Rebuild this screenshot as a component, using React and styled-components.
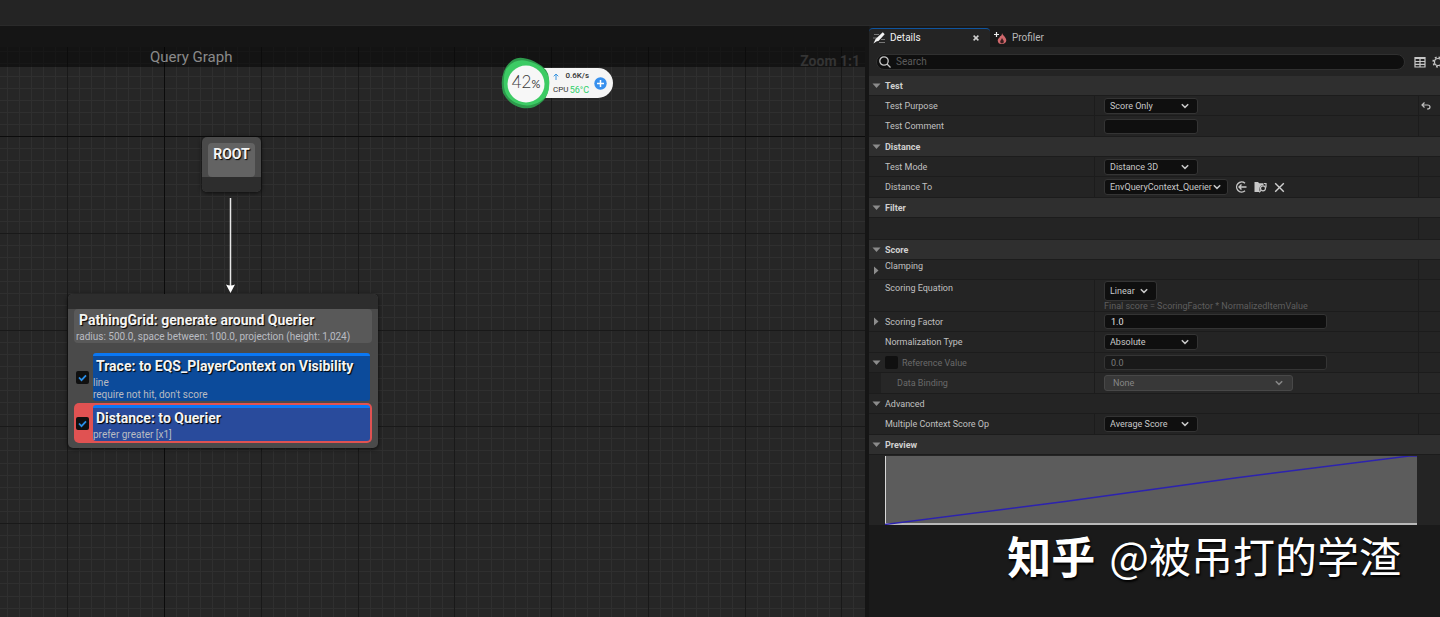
import React from "react";
import styled, { createGlobalStyle, css } from "styled-components";

const Global = createGlobalStyle`
  *, *::before, *::after { box-sizing: border-box; }
  body {
    margin: 0;
    background: #1a1a1a;
    color: #c0c0c0;
    font-family: Roboto, "Noto Sans CJK SC", sans-serif;
    font-size: 9px;
    line-height: 12px;
  }
  h1, h2, h3, p { margin: 0; font: inherit; }
  button, input, select { font: inherit; color: inherit; margin: 0; padding: 0; border: 0; background: none; }
  svg { display: block; flex: none; }
`;

const Page = styled.div`
  min-height: 100vh;
  display: flex;
  flex-direction: column;
`;
const TopBar = styled.header`
  height: 26px;
  background: #242424;
  border-bottom: 1px solid #2a2a2a;
`;
const Workspace = styled.main`
  flex: 1;
  display: grid;
  grid-template-columns: minmax(400px, 1fr) minmax(420px, 571px);
  column-gap: 4px;
  background: #151515;
`;

/* ---------- graph ---------- */
const GraphPane = styled.section`
  display: flex;
  flex-direction: column;
  padding-top: 21px;
  overflow: hidden;
`;
const Canvas = styled.div`
  flex: 1;
  position: relative;
  background: #262626;
`;
const GridSvg = styled.svg`
  position: absolute;
  inset: 0;
  width: 100%;
  height: 100%;
`;
const TitleBar = styled.div`
  position: relative;
  height: 20px;
  padding: 0 5px 0 150px;
  display: flex;
  justify-content: space-between;
  background: rgba(0, 0, 0, 0.5);
  color: #8a8a8a;
  font-size: 15px;
  line-height: 20px;
`;
const ZoomLabel = styled.span`
  padding-top: 4px;
  color: #343434;
  font-size: 14px;
  font-weight: 700;
`;
const Wire = styled.svg`
  position: absolute;
  left: 224px;
  top: 151px;
`;
const nodeFrame = css`
  position: absolute;
  border-radius: 5px;
  background: #4a4a4a;
  box-shadow: 0 1px 4px rgba(0, 0, 0, 0.7);
  overflow: hidden;
`;
const RootNode = styled.article`
  ${nodeFrame}
  left: 202px;
  top: 90px;
  width: 59px;
  padding: 6px 6px 0;
  &::after {
    content: "";
    display: block;
    height: 15px;
    margin: 0 -6px;
    background: #2d2d2d;
  }
`;
const NodeTitle = styled.h2`
  padding-bottom: 2px;
  color: #f4f4f4;
  font-size: 14px;
  font-weight: 700;
  line-height: 18px;
  text-shadow: 1px 1px 1px #000;
  white-space: nowrap;
`;
const RootFace = styled.div`
  height: 34px;
  padding-top: 2px;
  border-radius: 4px;
  background: #636363;
  text-align: center;
`;
const QueryNode = styled.article`
  ${nodeFrame}
  left: 68px;
  top: 247px;
  width: 310px;
  padding: 0 6px 5px;
  &::before {
    content: "";
    display: block;
    height: 15px;
    margin: 0 -6px;
    background: #2d2d2d;
  }
`;
const Generator = styled.div`
  height: 34px;
  padding: 2px 2px 0;
  border-radius: 4px;
  background: #595959;
`;
const Detail = styled.p`
  color: #b9bcc2;
  font-size: 10px;
  line-height: 12px;
  white-space: nowrap;
`;
const Indent = styled.div`
  padding-left: 3px;
`;
const TestList = styled.div`
  padding-top: 8px;
  display: grid;
`;
const TestCard = styled.div`
  display: grid;
  grid-template-columns: 17px 1fr;
  align-items: center;
  padding: 2px;
  border-radius: 5px;
  background: ${(p) => (p.$selected ? "#e05252" : "transparent")};
`;
const TestBody = styled.div`
  padding-top: 1px;
  border-top: 3px solid #0a78f5;
  border-radius: 3px;
  background: ${(p) => (p.$selected ? "#294b9c" : "#0c4b9b")};
`;
const Tick = styled.input.attrs({ type: "checkbox" })`
  appearance: none;
  width: 13px;
  height: 13px;
  border-radius: 2px;
  background: #101010;
  &:checked {
    background: #101010 url("data:image/svg+xml,%3Csvg xmlns='http://www.w3.org/2000/svg' viewBox='0 0 13 13'%3E%3Cpath d='M3 6.5l2.5 2.6L10 4.4' fill='none' stroke='%232a8fe8' stroke-width='1.8'/%3E%3C/svg%3E");
  }
`;

/* ---------- resource monitor ---------- */
const Monitor = styled.aside`
  position: absolute;
  left: 501px;
  top: 10px;
  display: flex;
  align-items: center;
`;
const Gauge = styled.div`
  position: relative;
  z-index: 1;
  display: grid;
  place-items: center;
  width: 50px;
  height: 52px;
  color: #3a3a3a;
  font-family: Lato, sans-serif;
  font-size: 17px;
  font-weight: 300;
  line-height: 20px;
  > * { grid-area: 1 / 1; }
  > span { position: relative; }
  small { font-size: 11px; font-weight: 400; }
`;
const Stats = styled.div`
  display: flex;
  align-items: center;
  gap: 5px;
  width: 78px;
  height: 30px;
  margin-left: -16px;
  padding: 0 6px 0 18px;
  border-radius: 0 15px 15px 0;
  background: #f5f5f5;
  color: #333;
`;
const StatLines = styled.div`
  flex: 1;
  display: grid;
  gap: 2px;
  font-size: 8px;
  white-space: nowrap;
`;
const StatLine = styled.div`
  display: flex;
  justify-content: space-between;
  align-items: center;
`;
const Rate = styled.span`
  font-weight: 500;
`;
const Temp = styled.span`
  color: #2fcf6a;
  font-size: 9px;
`;
const RoundButton = styled.button`
  flex: none;
`;

/* ---------- details panel ---------- */
const Panel = styled.section`
  display: flex;
  flex-direction: column;
  background: #1a1a1a;
`;
const Tabs = styled.nav`
  display: flex;
  padding-top: 2px;
  height: 21px;
`;
const Tab = styled.button`
  display: flex;
  align-items: center;
  gap: 5px;
  width: ${(p) => (p.$active ? "121px" : "auto")};
  padding: 0 11px 0 4px;
  border-radius: 4px 4px 0 0;
  border-top: 1px solid ${(p) => (p.$active ? "#0f55a0" : "transparent")};
  background: ${(p) => (p.$active ? "#242424" : "transparent")};
  color: ${(p) => (p.$active ? "#f0f0f0" : "#b8b8b8")};
  font-size: 10px;
  > :nth-child(3) { margin-left: auto; }
`;
const SearchRow = styled.div`
  display: flex;
  align-items: center;
  gap: 9px;
  height: 29px;
  padding-left: 7px;
  background: #242424;
  overflow: hidden;
`;
const SearchBox = styled.label`
  flex: 1;
  display: flex;
  align-items: center;
  gap: 5px;
  height: 16px;
  padding-left: 2px;
  border: 1px solid #303030;
  border-radius: 8px;
  background: #0f0f0f;
  color: #c8c8c8;
  input { flex: 1; outline: 0; font-size: 10px; }
  input::placeholder { color: #5c5c5c; opacity: 1; }
`;
const Tools = styled.div`
  display: flex;
  gap: 6px;
  margin-right: -4px;
  color: #c8c8c8;
`;
const Group = styled.section``;
const GroupHead = styled.h2`
  display: flex;
  align-items: center;
  gap: 4px;
  height: 20px;
  padding-left: 3px;
  border-bottom: 1px solid #1c1c1c;
  background: #2f2f2f;
  color: #d0d0d0;
  font-weight: 700;
`;
const Row = styled.div`
  display: grid;
  grid-template-columns: 226px 1fr 22px;
  height: 20px;
  border-bottom: 1px solid #1c1c1c;
  background: ${(p) => (p.$nested ? "#272727" : "#242424")};
  color: ${(p) => (p.$muted ? "#6a6a6a" : "#c0c0c0")};
  &:nth-of-type(even) { height: 21px; }
  && { ${(p) => p.$height && css`height: ${p.$height}px;`} }
`;
const LabelCell = styled.div`
  display: flex;
  align-items: ${(p) => (p.$top ? "flex-start" : "center")};
  gap: 4px;
  padding-left: ${(p) => (p.$nested ? "28px" : "3px")};
  border-right: 1px solid ${(p) => (p.$plain ? "transparent" : "#1c1c1c")};
  white-space: nowrap;
  ${(p) => p.$nested && css`box-shadow: inset 12px 0 #202020;`}
  ${(p) => p.$lowered && css`padding-top: 2px;`}
`;
const ArrowSlot = styled.span`
  width: 9px;
  color: #8c8c8c;
  ${(p) => p.$low && css`padding-top: 6px;`}
`;
const ValueCell = styled.div`
  display: flex;
  align-items: center;
  gap: 7px;
  padding-left: 9px;
  color: #c8c8c8;
`;
const ResetCell = styled.div`
  display: grid;
  place-items: center start;
  padding-left: 2px;
  border-left: 1px solid ${(p) => (p.$plain ? "transparent" : "#1c1c1c")};
`;
const SelectBox = styled.span`
  display: grid;
  align-items: center;
  width: ${(p) => p.$width}px;
  height: ${(p) => (p.$tall ? 20 : 16)}px;
  border: 1px solid ${(p) => (p.$flat ? "#484848" : "#343434")};
  border-radius: 3px;
  background: ${(p) => (p.$flat ? "#383838" : "#0f0f0f")};
  color: ${(p) => (p.$flat ? "#868686" : "#c8c8c8")};
  > * { grid-area: 1 / 1; }
  > svg { justify-self: end; margin-right: ${(p) => p.$inset || 8}px; pointer-events: none; }
  select {
    appearance: none;
    height: 100%;
    padding-left: ${(p) => (p.$flat ? 8 : 5)}px;
    outline: 0;
    opacity: 1;
  }
`;
const TextBox = styled.input`
  width: ${(p) => p.$width}px;
  height: 15px;
  padding-left: 6px;
  border: 1px solid #343434;
  border-radius: 3px;
  background: ${(p) => (p.disabled ? "#191919" : "#0f0f0f")};
  color: ${(p) => (p.disabled ? "#7a7a7a" : "#e0e0e0")};
`;
const IconButton = styled.button`
  display: grid;
  place-items: center;
`;
const Equation = styled.div`
  display: grid;
  align-content: end;
  padding-left: 9px;
`;
const Formula = styled.p`
  color: #5e5e5e;
  line-height: 10px;
`;
const ChartRow = styled.div`
  padding: 1px 23px 0 16px;
  background: #242424;
  svg { width: 100%; height: 69px; }
`;
const Watermark = styled.footer`
  display: flex;
  justify-content: flex-end;
  align-items: center;
  gap: 14px;
  padding: 3px 39px 0 0;
  color: #fff;
  font-family: "Noto Sans CJK SC", sans-serif;
  font-size: 42px;
  line-height: 54px;
  text-shadow: 1px 2px 2px #000;
  white-space: nowrap;
  b { font-size: 44px; font-weight: 700; }
`;

const Chevron = () => (
  <svg width="8" height="6" viewBox="0 0 8 6" fill="none" stroke="currentColor" strokeWidth="1.5"><path d="M.8 1.2 4 4.4l3.2-3.2" /></svg>
);
const Triangle = ({ closed }) => (
  <svg width="9" height="9" viewBox="0 0 9 9" fill="#8c8c8c"><path d={closed ? "M2 0.5v8L6.5 4.5z" : "M0.5 2.5h8L4.5 7z"} /></svg>
);

function Select({ id, value, ...box }) {
  return (
    <SelectBox {...box}>
      <select id={id} defaultValue={value} disabled={box.$flat}><option>{value}</option></select>
      <Chevron />
    </SelectBox>
  );
}

function Property({ id, label, arrow, children, reset, ...row }) {
  return (
    <Row {...row}>
      <LabelCell $nested={row.$nested}>
        {!row.$nested && <ArrowSlot>{arrow && <Triangle closed={arrow === "closed"} />}</ArrowSlot>}
        <label htmlFor={id}>{label}</label>
      </LabelCell>
      <ValueCell>{children}</ValueCell>
      <ResetCell>{reset}</ResetCell>
    </Row>
  );
}

const Head = ({ children }) => <GroupHead><Triangle />{children}</GroupHead>;

/* 8 × 8 major squares, each split into 8 minor ones */
const TILE = 774;
const MAJORS = 8;
const MINORS = 64;
const range = (n) => Array.from({ length: n }, (_, i) => i);
const at = (i, count) => Math.round((i * TILE) / count);
const majorColor = (i) => (i === 0 ? "#0b0b0b" : "#191919");

function Grid() {
  return (
    <GridSvg aria-hidden="true" shapeRendering="crispEdges">
      <defs>
        <pattern id="grid" x="164" y="89" width={TILE} height={TILE} patternUnits="userSpaceOnUse">
          {range(MINORS).filter((i) => i % MAJORS).map((i) => (
            <path key={i} d={`M${at(i, MINORS)} 0h1v${TILE}h-1zM0 ${at(i, MINORS)}h${TILE}v1H0z`} fill="#2f2f2f" />
          ))}
          {range(MAJORS).reverse().map((i) => (
            <path key={i} d={`M${at(i, MAJORS)} 0h1v${TILE}h-1zM0 ${at(i, MAJORS)}h${TILE}v1H0z`} fill={majorColor(i)} />
          ))}
        </pattern>
      </defs>
      <rect width="100%" height="100%" fill="url(#grid)" />
    </GridSvg>
  );
}

function Graph() {
  return (
    <GraphPane>
      <Canvas>
        <Grid />
        <TitleBar>
          <span>Query Graph</span>
          <ZoomLabel>Zoom 1:1</ZoomLabel>
        </TitleBar>
        <Wire width="14" height="96" viewBox="0 0 14 96">
          <path d="M6.5 0v88" stroke="#e6e6e6" strokeWidth="1.5" />
          <path d="M2 86.5q4.5 2 9 0L6.5 95z" fill="#fff" />
        </Wire>
        <RootNode>
          <RootFace><NodeTitle>ROOT</NodeTitle></RootFace>
        </RootNode>
        <QueryNode>
          <Generator>
            <Indent><NodeTitle>PathingGrid: generate around Querier</NodeTitle></Indent>
            <Detail>radius: 500.0, space between: 100.0, projection (height: 1,024)</Detail>
          </Generator>
          <TestList>
            <TestCard>
              <Tick defaultChecked aria-label="Trace test enabled" />
              <TestBody>
                <Indent><NodeTitle>Trace: to EQS_PlayerContext on Visibility</NodeTitle></Indent>
                <Detail>line</Detail>
                <Detail>require not hit, don't score</Detail>
              </TestBody>
            </TestCard>
            <TestCard $selected>
              <Tick defaultChecked aria-label="Distance test enabled" />
              <TestBody $selected>
                <Indent><NodeTitle>Distance: to Querier</NodeTitle></Indent>
                <Detail>prefer greater [x1]</Detail>
              </TestBody>
            </TestCard>
          </TestList>
        </QueryNode>
        <Monitor>
          <Gauge>
            <svg width="50" height="52" viewBox="0 0 50 52">
              <path d="M3 14Q10-1 22 1q8 1 14 5 12 6 12 16 1 15-6 22-9 9-21 7Q8 48 2 36-1 24 3 14z" fill="#2d9a4c" />
              <path d="M5 12Q14 1 26 4q19 4 22 18 2 16-8 22-11 7-22 3Q5 43 3 30 2 19 5 12z" fill="#3fd468" opacity=".85" />
              <circle cx="25" cy="27" r="18.500" fill="#f7f7f7" />
            </svg>
            <span>42<small>%</small></span>
          </Gauge>
          <Stats>
            <StatLines>
              <StatLine>
                <svg width="6" height="7" viewBox="0 0 6 7" fill="none" stroke="#3c96e0" strokeWidth="1"><path d="M3 7V1M.7 3.3 3 1l2.3 2.3" /></svg>
                <Rate>0.6K/s</Rate>
              </StatLine>
              <StatLine><span>CPU</span><Temp>56°C</Temp></StatLine>
            </StatLines>
            <RoundButton aria-label="Boost">
              <svg width="13" height="13" viewBox="0 0 13 13"><circle cx="6.5" cy="6.5" r="6.2" fill="#3790ee" /><path d="M6.5 3v7M3 6.5h7" stroke="#fff" strokeWidth="1.5" /></svg>
            </RoundButton>
          </Stats>
        </Monitor>
      </Canvas>
    </GraphPane>
  );
}

const PencilIcon = () => (
  <svg width="12" height="12" viewBox="0 0 12 12">
    <path d="M1 2.5h5M0 6h4M8 7.500h4M6 10.500h6" stroke="#777" />
    <path d="M9.800.3 11.700 2.200 5.500 9 3.800 9.300.4 11.600 2 8.200 2.600 7z" fill="#f2f2f2" />
  </svg>
);
const FlameIcon = () => (
  <svg width="13" height="13" viewBox="0 0 13 13">
    <path d="M2.500 0v5M0 2.500h5" stroke="#eee" strokeWidth="1.200" />
    <path d="M8 1c.5 2.200 4.300 4.200 4.300 7.400A3.900 3.900 0 0 1 8 12a3.900 3.900 0 0 1-4.300-3.500C3.700 6.500 5.800 6 6 4.200 7.400 4 8 3 8 1z" fill="#d0686c" />
    <path d="M8 5.800c.3 1.500 1.800 2.400 1.800 3.900a1.800 1.800 0 0 1-3.600 0C6.200 8.300 7.600 7.800 8 5.800z" fill="#3a1c1e" />
  </svg>
);

function Details() {
  return (
    <Panel>
      <Tabs>
        <Tab $active>
          <PencilIcon /><span>Details</span>
          <svg width="6" height="6" viewBox="0 0 6 6" stroke="#d0d0d0" strokeWidth="1.5"><path d="M.6.6l4.800 4.800M5.400.6.6 5.400" /></svg>
        </Tab>
        <Tab><FlameIcon /><span>Profiler</span></Tab>
      </Tabs>
      <SearchRow>
        <SearchBox>
          <svg width="12" height="12" viewBox="0 0 12 12" fill="none" stroke="currentColor" strokeWidth="1.300"><circle cx="5" cy="5" r="4.200" /><path d="m8 8 3.500 3.500" /></svg>
          <input type="text" placeholder="Search" aria-label="Search" />
        </SearchBox>
        <Tools>
          <IconButton aria-label="Table view">
            <svg width="12" height="12" viewBox="0 0 12 12" fill="none" stroke="currentColor" strokeWidth="1.200"><path d="M1 1.500h10v9.500H1zM1 2.500h10M1 5.500h10M1 8.300h10M6 2.500V11" /></svg>
          </IconButton>
          <IconButton aria-label="Settings">
            <svg width="12" height="12" viewBox="0 0 12 12" fill="none" stroke="currentColor"><circle cx="6" cy="6" r="3.500" strokeWidth="1.200" /><circle cx="6" cy="6" r="4.900" strokeWidth="1.500" strokeDasharray="1.800 2.050" /></svg>
          </IconButton>
        </Tools>
      </SearchRow>

      <Group>
        <Head>Test</Head>
        <Property id="purpose" label="Test Purpose" reset={
          <IconButton aria-label="Reset to default">
            <svg width="10" height="8" viewBox="0 0 10 8" fill="none" stroke="#c0c0c0" strokeWidth="1.200"><path d="M3.500.5 1 3l2.500 2.500M1 3h5.500Q9 3 9 5t-2.500 2H6" /></svg>
          </IconButton>}>
          <Select id="purpose" value="Score Only" $width={94} />
        </Property>
        <Property id="comment" label="Test Comment">
          <TextBox id="comment" type="text" $width={94} />
        </Property>
      </Group>

      <Group>
        <Head>Distance</Head>
        <Property id="mode" label="Test Mode"><Select id="mode" value="Distance 3D" $width={94} /></Property>
        <Property id="target" label="Distance To">
          <Select id="target" value="EnvQueryContext_Querier" $width={124} $inset={6} />
          <IconButton aria-label="Use selected asset">
            <svg width="12" height="12" viewBox="0 0 12 12" fill="none" stroke="#c8c8c8" strokeWidth="1.400"><path d="M10 2.300A5 5 0 1 0 10 9.700M11.500 6H4M6.500 3.500 4 6l2.500 2.500" /></svg>
          </IconButton>
          <IconButton aria-label="Browse to asset">
            <svg width="13" height="12" viewBox="0 0 13 12"><path d="M.5 1h3.500l1.200 1.200H9.500V4Q5.500 4 5.500 8v3H.5z" fill="#c8c8c8" /><circle cx="9" cy="7.300" r="2.500" fill="none" stroke="#c8c8c8" strokeWidth="1.200" /><path d="M7.200 9.200 5.200 11.400M10 2.500h2v4" fill="none" stroke="#c8c8c8" strokeWidth="1.200" /></svg>
          </IconButton>
          <IconButton aria-label="Clear">
            <svg width="11" height="11" viewBox="0 0 11 11" stroke="#d0d0d0" strokeWidth="1.400"><path d="m1.200 1.200 8.600 8.600M9.800 1.200 1.200 9.800" /></svg>
          </IconButton>
        </Property>
      </Group>

      <Group>
        <Head>Filter</Head>
        <Row $height={22}><LabelCell $plain /><ValueCell /><ResetCell /></Row>
      </Group>

      <Group>
        <Head>Score</Head>
        <Row>
          <LabelCell $top $plain><ArrowSlot $low><Triangle closed /></ArrowSlot><span>Clamping</span></LabelCell>
          <ValueCell /><ResetCell />
        </Row>
        <Row $height={32}>
          <LabelCell $top $lowered><ArrowSlot /><label htmlFor="equation">Scoring Equation</label></LabelCell>
          <Equation>
            <Select id="equation" value="Linear" $width={53} $tall />
            <Formula>Final score = ScoringFactor * NormalizedItemValue</Formula>
          </Equation>
          <ResetCell />
        </Row>
        <Property id="factor" label="Scoring Factor" arrow="closed">
          <TextBox id="factor" type="text" defaultValue="1.0" $width={223} />
        </Property>
        <Property id="norm" label="Normalization Type"><Select id="norm" value="Absolute" $width={94} /></Property>
        <Row $muted>
          <LabelCell>
            <ArrowSlot><Triangle /></ArrowSlot>
            <Tick id="useref" />
            <label htmlFor="useref">Reference Value</label>
          </LabelCell>
          <ValueCell><TextBox type="text" aria-label="Reference Value" defaultValue="0.0" disabled $width={223} /></ValueCell>
          <ResetCell />
        </Row>
        <Property id="binding" label="Data Binding" $nested $muted>
          <Select id="binding" value="None" $width={189} $inset={9} $flat />
        </Property>
        <Row>
          <LabelCell $plain><ArrowSlot><Triangle /></ArrowSlot><span>Advanced</span></LabelCell>
          <ValueCell /><ResetCell $plain />
        </Row>
        <Property id="op" label="Multiple Context Score Op"><Select id="op" value="Average Score" $width={94} /></Property>
      </Group>

      <Group>
        <Head>Preview</Head>
        <ChartRow>
          <svg viewBox="0 0 532 69" preserveAspectRatio="none" role="img" aria-label="Linear score curve">
            <rect width="532" height="69" fill="#5c5c5c" />
            <path d="M.5 0v69" stroke="#d8d8d8" />
            <path d="M0 68h532" stroke="#d8d8d8" strokeWidth="1.500" />
            <path d="M0 68.500 180 45.500 350 22 524 0H532" stroke="#2c22b0" strokeWidth="1.400" fill="none" />
          </svg>
        </ChartRow>
      </Group>
      <Watermark><b>知乎</b><span>@被吊打的学渣</span></Watermark>
    </Panel>
  );
}

export default function App() {
  return (
    <>
      <Global />
      <Page>
        <TopBar />
        <Workspace>
          <Graph />
          <Details />
        </Workspace>
      </Page>
    </>
  );
}
